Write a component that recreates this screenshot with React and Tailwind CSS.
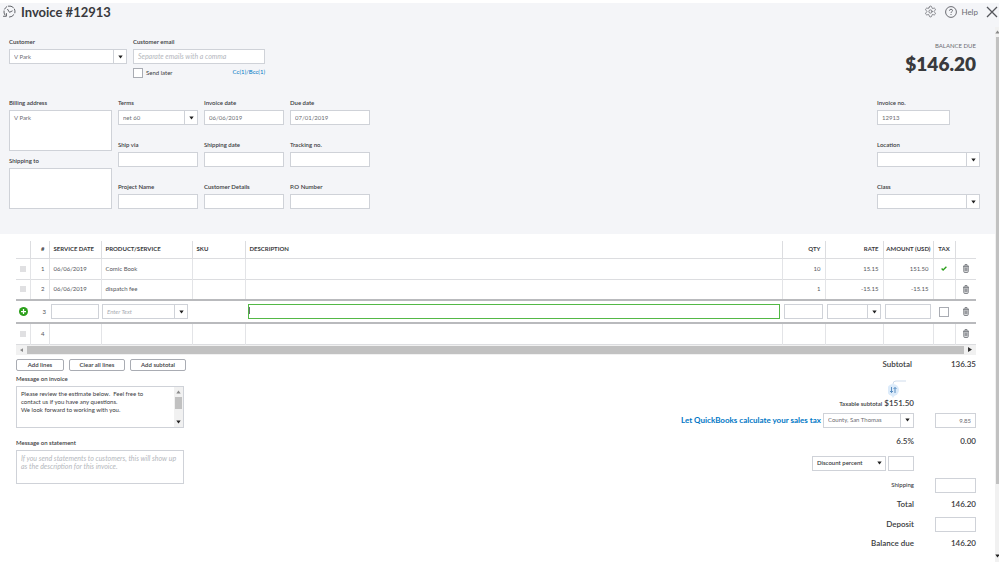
import { useState } from 'react';
import { Settings } from 'lucide-react';

const font = 'font-[Lato,"Open_Sans",sans-serif]';
const box = 'border border-[#cfd2d8] bg-white outline-none placeholder:italic placeholder:text-[#b4b7bd]';
const amountText = 'w-[41px] text-right text-[8px] leading-[10px] font-semibold';

const Caret = () => (
    <svg viewBox="0 0 5 4" className="w-[5px] h-[4px]" aria-hidden="true">
        <path d="M0.3 0.5h4.4L2.5 3.5z" fill="#222" />
    </svg>
);

const Field = ({ id, label, className = '', children }) => (
    <div className={`flex flex-col gap-[3px] ${className}`}>
        <label htmlFor={id} className="text-[6px] leading-[8px] text-[#393a3d] font-semibold">{label}</label>
        {children}
    </div>
);

const TextInput = ({ className = '', ...props }) => (
    <input type="text" className={`block h-[15px] w-full px-[4px] text-[6px] text-[#6b6c72] placeholder:text-[7px] ${box} ${className}`} {...props} />
);

const Select = ({ options, className = '', plain = false, muted = false, ...props }) => (
    <div className={`relative h-[15px] ${className}`}>
        <select
            className={`block appearance-none h-[15px] w-full pl-[4px] pr-[14px] text-[6px] leading-[8px] ${plain ? 'font-semibold text-[#393a3d]' : muted ? 'italic text-[#a9acb3]' : 'text-[#6b6c72]'} ${box}`}
            {...props}
        >
            {options.map((o) => <option key={o}>{o}</option>)}
        </select>
        <span className={`pointer-events-none absolute inset-y-0 right-0 w-[14px] flex items-center justify-center ${plain ? '' : 'border-l border-[#cfd2d8]'}`}>
            <Caret />
        </span>
    </div>
);

const HistoryIcon = () => (
    <svg viewBox="0 0 24 24" className="w-[13px] h-[13px]" fill="none" stroke="#54565b" strokeWidth="1.7" strokeLinecap="round" aria-hidden="true">
        <path d="M3.500 18.500A10.300 10.300 0 0 1 1.800 11" />
        <path d="M3 7.500A10.300 10.300 0 0 1 7 3" />
        <path d="M10 2a10.300 10.300 0 0 1 9 2.500" />
        <path d="M21.200 7.500a10.300 10.300 0 0 1 .8 7" />
        <path d="M20 18a10.300 10.300 0 0 1-8 4.300" />
        <path d="M0.800 20.800h5.500v-5" />
        <path d="M8.500 8l3.500 5.500 5-2.500" />
    </svg>
);

const TrashIcon = () => (
    <svg viewBox="0 0 12 18" className="w-[6px] h-[9px]" fill="none" stroke="#7b7d82" strokeWidth="1.800" aria-hidden="true">
        <path d="M4 3V1h4v2" />
        <path d="M1.500 4h9v11q0 2-2 2h-5q-2 0-2-2z" fill="#d7d8da" />
        <path d="M0 4.500h12M4.500 7v7M7.500 7v7" />
    </svg>
);

const GripIcon = () => (
    <svg viewBox="0 0 6 6" className="w-[6px] h-[6px] ml-[4px]" aria-hidden="true">
        {[0, 2, 4].map((x) => [0, 2, 4].map((y) => (
            <rect key={`${x}-${y}`} x={x + 0.3} y={y + 0.3} width="1.400" height="1.400" fill="#bfc1c5" />
        )))}
    </svg>
);

const lines = [
    { n: 1, date: '06/06/2019', product: 'Comic Book', qty: '10', rate: '15.15', amount: '151.50', tax: true },
    { n: 2, date: '06/06/2019', product: 'dispatch fee', qty: '1', rate: '-15.15', amount: '-15.15' },
];

const LineRow = ({ line }) => (
    <tr className="h-[21px] border-b border-[#dcdde0] text-[#54565b]">
        <td><GripIcon /></td>
        <td className="border-l border-[#e3e4e7] text-right pr-[4px]">{line.n}</td>
        <td className="border-l border-[#e3e4e7] pl-[4px]">{line.date}</td>
        <td className="border-l border-[#e3e4e7] pl-[4px]">{line.product}</td>
        <td className="border-l border-[#e3e4e7]"></td>
        <td className="border-l border-[#e3e4e7]"></td>
        <td className="border-l border-[#e3e4e7] text-right pr-[4px]">{line.qty}</td>
        <td className="border-l border-[#e3e4e7] text-right pr-[4px]">{line.rate}</td>
        <td className="border-l border-[#e3e4e7] text-right pr-[4px]">{line.amount}</td>
        <td className="border-l border-[#e3e4e7]">
            {line.tax && (
                <svg viewBox="0 0 8 6" className="w-[6px] h-[5px] mx-auto" fill="none" stroke="#2ca01c" strokeWidth="1.800" aria-label="Taxable">
                    <path d="M0.8 3l2 2L7.200 0.800" />
                </svg>
            )}
        </td>
        <td className="border-l border-[#e3e4e7]">
            <button aria-label="Delete line" className="flex mx-auto"><TrashIcon /></button>
        </td>
    </tr>
);

const InvoiceTable = () => {
    const [taxed, setTaxed] = useState(false);
    const th = 'border-l border-[#dcdde0] font-bold';

    return (
        <table className="w-full table-fixed border-collapse text-[6px] leading-[8px]">
            <colgroup>
                <col className="w-[14px]" />
                <col className="w-[19px]" />
                <col className="w-[52px]" />
                <col className="w-[91px]" />
                <col className="w-[53px]" />
                <col />
                <col className="w-[43px]" />
                <col className="w-[58px]" />
                <col className="w-[50px]" />
                <col className="w-[22px]" />
                <col className="w-[21px]" />
            </colgroup>
            <thead>
                <tr className="h-[17px] border-b border-[#dcdde0] text-[#393a3d] text-left">
                    <th></th>
                    <th className={`${th} text-right pr-[4px]`}>#</th>
                    <th className={`${th} pl-[4px]`}>SERVICE DATE</th>
                    <th className={`${th} pl-[4px]`}>PRODUCT/SERVICE</th>
                    <th className={`${th} pl-[4px]`}>SKU</th>
                    <th className={`${th} pl-[4px]`}>DESCRIPTION</th>
                    <th className={`${th} text-right pr-[4px]`}>QTY</th>
                    <th className={`${th} text-right pr-[4px]`}>RATE</th>
                    <th className={`${th} text-right pr-[2px] whitespace-nowrap`}>AMOUNT (USD)</th>
                    <th className={`${th} text-center`}>TAX</th>
                    <th className={th}></th>
                </tr>
            </thead>
            <tbody>
                {lines.map((line) => <LineRow key={line.n} line={line} />)}
                {/* Line being edited */}
                <tr className="h-[23px] border-y-2 border-[#b9babd] text-[#54565b]">
                    <td>
                        <button aria-label="Add line" className="flex ml-[3px]">
                            <svg viewBox="0 0 18 18" className="w-[9px] h-[9px]">
                                <circle cx="9" cy="9" r="9" fill="#2ca01c" />
                                <path d="M9 4v10M4 9h10" stroke="#fff" strokeWidth="2.500" />
                            </svg>
                        </button>
                    </td>
                    <td className="text-right pr-[3px]">3</td>
                    <td className="px-[2px]"><TextInput aria-label="Service date" /></td>
                    <td className="pl-[1px] pr-[4px]"><Select aria-label="Product or service" options={['Enter Text']} muted /></td>
                    <td></td>
                    <td className="pl-[3px] pr-[2px]">
                        <div className="flex items-center h-[15px] border border-[#53b846]">
                            <span className="h-[7px] w-px bg-[#6b6c72] self-start mt-[2px]"></span>
                            <input type="text" aria-label="Description" className="w-full h-full px-[2px] outline-none" />
                        </div>
                    </td>
                    <td className="px-[2px]"><TextInput aria-label="Quantity" /></td>
                    <td className="px-[2px]"><Select aria-label="Rate" options={['']} /></td>
                    <td className="px-[2px]"><TextInput aria-label="Amount" /></td>
                    <td>
                        <input
                            type="checkbox"
                            aria-label="Tax"
                            checked={taxed}
                            onChange={() => setTaxed(!taxed)}
                            className="appearance-none block mx-auto w-[10px] h-[10px] border border-[#a9acb3] bg-white checked:bg-[#2ca01c]"
                        />
                    </td>
                    <td><button aria-label="Delete line" className="flex mx-auto"><TrashIcon /></button></td>
                </tr>
                <LineRow line={{ n: 4 }} />
            </tbody>
        </table>
    );
};

const AmountInput = (props) => (
    <TextInput className="text-right" {...props} />
);

const Totals = () => (
    <div className="flex flex-col items-end text-[#393a3d]">
        <div className="flex items-center h-[18px]">
            <span className="text-[8px] leading-[10px] font-semibold mr-[23px]">Subtotal</span>
            <span className={amountText}>136.35</span>
        </div>
        <div className="flex justify-end mt-[7px] mr-[62px] w-[26px]">
            <svg viewBox="0 0 26 18" className="w-[26px] h-[18px]" aria-hidden="true">
                <path d="M5 4q0-3 3-3h10" fill="none" stroke="#cfdcec" strokeWidth="1" />
                <path d="M3 15l2 3 2-3z" fill="#dcebfa" />
                <circle cx="5" cy="10" r="6" fill="#dcebfa" />
                <path d="M3.500 7v5.500M2 11l1.500 1.500L5 11M7 13V7.500M5.500 9L7 7.500 8.500 9" fill="none" stroke="#4a83bb" strokeWidth="0.900" />
            </svg>
        </div>
        <div className="flex items-baseline gap-[2px] mr-[62px]">
            <span className="text-[6px] leading-[10px] font-semibold">Taxable subtotal</span>
            <span className="text-[8px] leading-[10px] font-semibold">$151.50</span>
        </div>
        <div className="flex items-center mt-[4px]">
            <a href="#sales-tax" className="text-[8px] leading-[10px] font-bold text-[#0077c5] mr-[2px]">Let QuickBooks calculate your sales tax</a>
            <Select aria-label="Tax rate" options={['County, San Thomas']} className="w-[91px] mr-[21px]" />
            <div className="w-[41px]"><AmountInput aria-label="Tax amount" defaultValue="9.85" /></div>
        </div>
        <div className="flex items-center mt-[8px]">
            <span className="text-[8px] leading-[10px] font-semibold mr-[21px]">6.5%</span>
            <span className={amountText}>0.00</span>
        </div>
        <div className="flex gap-[2px] mr-[62px] mt-[10px]">
            <Select aria-label="Discount type" options={['Discount percent']} plain className="w-[74px]" />
            <div className="w-[26px]"><TextInput aria-label="Discount" /></div>
        </div>
        <div className="flex items-center mt-[7px]">
            <label htmlFor="shipping" className="text-[6px] leading-[8px] font-medium mr-[21px]">Shipping</label>
            <div className="w-[41px]"><AmountInput id="shipping" /></div>
        </div>
        <div className="flex items-center mt-[6px]">
            <span className="text-[8px] leading-[10px] font-semibold mr-[21px]">Total</span>
            <span className={amountText}>146.20</span>
        </div>
        <div className="flex items-center mt-[8px]">
            <label htmlFor="deposit" className="text-[8px] leading-[10px] font-semibold mr-[21px]">Deposit</label>
            <div className="w-[41px]"><AmountInput id="deposit" /></div>
        </div>
        <div className="flex items-center mt-[6px]">
            <span className="text-[8px] leading-[10px] font-semibold mr-[21px]">Balance due</span>
            <span className={amountText}>146.20</span>
        </div>
    </div>
);

const App = () => {
    return (
        <div className={`min-h-screen flex flex-col bg-white text-[#393a3d] ${font}`}>
            <header className="flex items-center justify-between h-[27px] pl-[3px] pr-px border-t-[3px] border-white bg-[#f4f5f8] pb-[7px]">
                <div className="flex items-center gap-[5px]">
                    <HistoryIcon />
                    <h1 className="text-[13px] leading-[16px] font-bold">Invoice #12913</h1>
                </div>
                <div className="flex items-center">
                    <button aria-label="Settings" className="mr-[8px]">
                        <Settings size={13} strokeWidth={1.5} color="#6b6c72" />
                    </button>
                    <button className="flex items-center gap-[4px] text-[8px] leading-[10px] text-[#6b6c72] mr-[8px]">
                        <svg viewBox="0 0 24 24" className="w-[12px] h-[12px]" fill="none" stroke="#6b6c72" strokeWidth="2" aria-hidden="true">
                            <circle cx="12" cy="12" r="10.800" />
                            <path d="M9 9.500q0-3 3-3t3 2.700q0 1.500-1.500 2.300T12 14M12 16v2" />
                        </svg>
                        Help
                    </button>
                    <button aria-label="Close">
                        <svg viewBox="0 0 12 12" className="w-[12px] h-[12px]" stroke="#54565b" strokeWidth="1.300" fill="none">
                            <path d="M1 1l10 10M11 1L1 11" />
                        </svg>
                    </button>
                </div>
            </header>

            <div className="flex flex-1">
                <main className="flex-1 min-w-0">
                    <section className="bg-[#f4f5f8] pl-[9px] pr-[15px] pt-[11px] pb-[25px]">
                        <div className="flex justify-between items-start h-[61px]">
                            <div className="flex gap-[6px]">
                                <Field id="customer" label="Customer" className="w-[118px]">
                                    <Select id="customer" options={['V Park']} />
                                </Field>
                                <div className="w-[132px]">
                                    <Field id="email" label="Customer email">
                                        <TextInput id="email" placeholder="Separate emails with a comma" />
                                    </Field>
                                    <div className="flex items-start justify-between mt-[4px]">
                                        <label className="flex items-center gap-[3px] text-[6px] leading-[8px]">
                                            <input type="checkbox" className="appearance-none w-[10px] h-[10px] border border-[#a9acb3] bg-white checked:bg-[#2ca01c]" />
                                            Send later
                                        </label>
                                        <a href="#cc" className="text-[6px] leading-[8px] text-[#0077c5]">Cc(1)/Bcc(1)</a>
                                    </div>
                                </div>
                            </div>
                            <div className="text-right pt-[4px] mr-[4px]">
                                <p className="text-[6px] leading-[8px] text-[#6b6c72]">BALANCE DUE</p>
                                <p className="text-[19px] leading-[22px] font-extrabold mt-[3px]">$146.20</p>
                            </div>
                        </div>

                        <div className="flex justify-between items-start">
                            <div className="flex gap-[6px]">
                                <div className="flex flex-col gap-[6px] w-[103px]">
                                    <Field id="billing" label="Billing address">
                                        <textarea id="billing" defaultValue="V Park" className={`block h-[41px] w-full resize-none px-[4px] py-[3px] text-[6px] leading-[8px] text-[#6b6c72] ${box}`} />
                                    </Field>
                                    <Field id="shipto" label="Shipping to">
                                        <textarea id="shipto" className={`block h-[41px] w-full resize-none px-[4px] py-[3px] text-[6px] leading-[8px] ${box}`} />
                                    </Field>
                                </div>
                                <div className="grid grid-cols-[80px_80px_80px] gap-x-[6px] gap-y-[16px] content-start">
                                    <Field id="terms" label="Terms"><Select id="terms" options={['net 60']} /></Field>
                                    <Field id="invdate" label="Invoice date"><TextInput id="invdate" defaultValue="06/06/2019" /></Field>
                                    <Field id="duedate" label="Due date"><TextInput id="duedate" defaultValue="07/01/2019" /></Field>
                                    <Field id="shipvia" label="Ship via"><TextInput id="shipvia" /></Field>
                                    <Field id="shipdate" label="Shipping date"><TextInput id="shipdate" /></Field>
                                    <Field id="tracking" label="Tracking no."><TextInput id="tracking" /></Field>
                                    <Field id="project" label="Project Name"><TextInput id="project" /></Field>
                                    <Field id="details" label="Customer Details"><TextInput id="details" /></Field>
                                    <Field id="po" label="P.O Number"><TextInput id="po" /></Field>
                                </div>
                            </div>
                            <div className="flex flex-col gap-[16px] w-[103px]">
                                <Field id="invno" label="Invoice no." className="w-[73px]"><TextInput id="invno" defaultValue="12913" /></Field>
                                <Field id="location" label="Location"><Select id="location" options={['']} /></Field>
                                <Field id="class" label="Class"><Select id="class" options={['']} /></Field>
                            </div>
                        </div>
                    </section>

                    <section className="pl-[16px] pr-[19px] pt-[7px]">
                        <InvoiceTable />

                        {/* Horizontal scroll bar */}
                        <div className="flex items-center h-[10px] bg-[#f1f1f1]">
                            <span className="w-[11px] flex justify-center">
                                <svg viewBox="0 0 4 5" className="w-[3px] h-[4px]"><path d="M4 0v5L0 2.500z" fill="#888" /></svg>
                            </span>
                            <span className="flex-1 h-[8px] bg-[#c1c1c1]"></span>
                            <span className="w-[12px] flex justify-center">
                                <svg viewBox="0 0 4 5" className="w-[4px] h-[5px]"><path d="M0 0v5l4-2.500z" fill="#333" /></svg>
                            </span>
                        </div>

                        <div className="flex justify-between items-start">
                            <div className="w-[170px] pt-[4px]">
                                <div className="flex gap-[5px] text-[6px] leading-[8px] font-semibold">
                                    <button className="w-[48px] h-[12px] rounded-[2px] border border-[#a9acb3]">Add lines</button>
                                    <button className="w-[56px] h-[12px] rounded-[2px] border border-[#a9acb3]">Clear all lines</button>
                                    <button className="w-[56px] h-[12px] rounded-[2px] border border-[#a9acb3]">Add subtotal</button>
                                </div>
                                <Field id="msg" label="Message on invoice" className="mt-[4px] w-[168px]">
                                    <div className={`flex h-[42px] ${box}`}>
                                        <textarea
                                            id="msg"
                                            className="flex-1 resize-none overflow-hidden outline-none pl-[4px] pt-[3px] text-[6px] leading-[8px]"
                                            defaultValue={'Please review the estimate below.  Feel free to\ncontact us if you have any questions.\nWe look forward to working with you.'}
                                        />
                                        <span className="w-[9px] bg-[#f1f1f1] flex flex-col items-center py-[3px]">
                                            <span className="rotate-180 opacity-50"><Caret /></span>
                                            <span className="w-[7px] h-[12px] mt-[3px] bg-[#c1c1c1]"></span>
                                            <span className="mt-auto"><Caret /></span>
                                        </span>
                                    </div>
                                </Field>
                                <Field id="stmt" label="Message on statement" className="mt-[11px] w-[168px]">
                                    <textarea
                                        id="stmt"
                                        placeholder="If you send statements to customers, this will show up as the description for this invoice."
                                        className={`block h-[34px] w-full resize-none overflow-hidden pl-[4px] pt-[3px] text-[7px] leading-[8px] ${box}`}
                                    />
                                </Field>
                            </div>
                            <Totals />
                        </div>
                    </section>
                </main>

                {/* Page scroll bar */}
                <aside className="w-[4px] bg-[#f1f1f1] flex flex-col items-center">
                    <span className="h-[10px] flex items-center rotate-180 opacity-50"><Caret /></span>
                    <span className="w-[3px] flex-[447] bg-[#c1c1c1]"></span>
                    <span className="flex-[66]"></span>
                    <span className="h-[12px] flex items-center"><Caret /></span>
                </aside>
            </div>
        </div>
    );
};

export default App;
